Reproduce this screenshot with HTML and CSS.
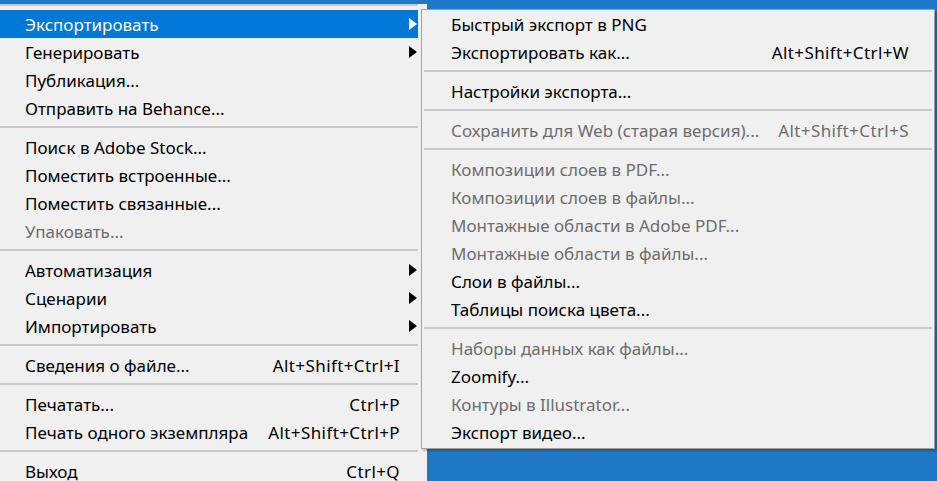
FILE: index.html
```html
<!DOCTYPE html>
<html lang="ru">
<head>
    <meta charset="UTF-8">
    <title>Файл — Экспортировать</title>
    <link rel="stylesheet" href="styles.css">
</head>
<body>
    <div class="menu main-menu">
        <div class="sep first"></div>
        <div class="item active"><span class="label">Экспортировать</span><span class="key"></span><span class="arrow"></span></div>
        <div class="item"><span class="label">Генерировать</span><span class="key"></span><span class="arrow"></span></div>
        <div class="item"><span class="label">Публикация...</span></div>
        <div class="item"><span class="label">Отправить на Behance...</span></div>
        <div class="sep"></div>
        <div class="item"><span class="label">Поиск в Adobe Stock...</span></div>
        <div class="item"><span class="label">Поместить встроенные...</span></div>
        <div class="item"><span class="label">Поместить связанные...</span></div>
        <div class="item disabled"><span class="label">Упаковать...</span></div>
        <div class="sep"></div>
        <div class="item"><span class="label">Автоматизация</span><span class="key"></span><span class="arrow"></span></div>
        <div class="item"><span class="label">Сценарии</span><span class="key"></span><span class="arrow"></span></div>
        <div class="item"><span class="label">Импортировать</span><span class="key"></span><span class="arrow"></span></div>
        <div class="sep"></div>
        <div class="item"><span class="label">Сведения о файле...</span><span class="key">Alt+Shift+Ctrl+I</span></div>
        <div class="sep"></div>
        <div class="item"><span class="label">Печатать...</span><span class="key">Ctrl+P</span></div>
        <div class="item"><span class="label">Печать одного экземпляра</span><span class="key">Alt+Shift+Ctrl+P</span></div>
        <div class="sep"></div>
        <div class="item"><span class="label">Выход</span><span class="key">Ctrl+Q</span></div>
    </div>

    <div class="menu submenu">
        <div class="item"><span class="label">Быстрый экспорт в PNG</span></div>
        <div class="item"><span class="label">Экспортировать как...</span><span class="key">Alt+Shift+Ctrl+W</span></div>
        <div class="sep"></div>
        <div class="item"><span class="label">Настройки экспорта...</span></div>
        <div class="sep"></div>
        <div class="item disabled"><span class="label">Сохранить для Web (старая версия)...</span><span class="key">Alt+Shift+Ctrl+S</span></div>
        <div class="sep"></div>
        <div class="item disabled"><span class="label">Композиции слоев в PDF...</span></div>
        <div class="item disabled"><span class="label">Композиции слоев в файлы...</span></div>
        <div class="item disabled"><span class="label">Монтажные области в Adobe PDF...</span></div>
        <div class="item disabled"><span class="label">Монтажные области в файлы...</span></div>
        <div class="item"><span class="label">Слои в файлы...</span></div>
        <div class="item"><span class="label">Таблицы поиска цвета...</span></div>
        <div class="sep"></div>
        <div class="item disabled"><span class="label">Наборы данных как файлы...</span></div>
        <div class="item"><span class="label">Zoomify...</span></div>
        <div class="item disabled"><span class="label">Контуры в Illustrator...</span></div>
        <div class="item"><span class="label">Экспорт видео...</span></div>
    </div>
</body>
</html>
```

FILE: styles.css
```css
body {
    margin: 0;
    height: 481px;
    overflow: hidden;
    position: relative;
    background-color: #1f78c6;
    font-family: 'Noto Sans', 'Open Sans', sans-serif;
    font-size: 17px;
    color: #000;
}

.menu {
    background-color: #f0f0f0;
    box-sizing: border-box;
}

.main-menu {
    width: 427px;
    height: 481px;
    padding-right: 9px;
}

.submenu {
    position: absolute;
    left: 421px;
    top: 9px;
    width: 514px;
    height: 440px;
    border: 1px solid #a0a0a0;
    padding: 0 1px;
    box-shadow: 2px 2px 2px rgba(0, 0, 0, 0.25);
}

.item {
    display: flex;
    align-items: center;
    height: 28px;
    padding-left: 25px;
    white-space: nowrap;
}

.submenu .item {
    padding-left: 28px;
}

.item .label {
    flex: 1;
}

.item .key {
    text-align: right;
    letter-spacing: 0.4px;
}

.item .arrow {
    width: 18px;
    height: 28px;
    flex: none;
    position: relative;
}

.main-menu .item .key {
    margin-right: 18px;
}

.main-menu .item .arrow {
    margin-left: -18px;
}

.item .arrow::after {
    content: '';
    position: absolute;
    left: 9px;
    top: 8px;
    border-left: 8px solid #000;
    border-top: 6px solid transparent;
    border-bottom: 6px solid transparent;
}

.submenu .item .key {
    margin-right: 24px;
}

.item.active {
    background-color: #0078d7;
    color: #fff;
}

.item.active .arrow::after {
    border-left-color: #fff;
}

.item.disabled {
    color: #6d6d6d;
}

.sep {
    height: 2px;
    margin: 4px 0 5px 0;
    background-color: #c8c8c8;
}

.sep.first {
    margin-top: 4px;
    margin-bottom: 4px;
}

.submenu .sep {
    margin-left: 1px;
    margin-right: 1px;
}
```
